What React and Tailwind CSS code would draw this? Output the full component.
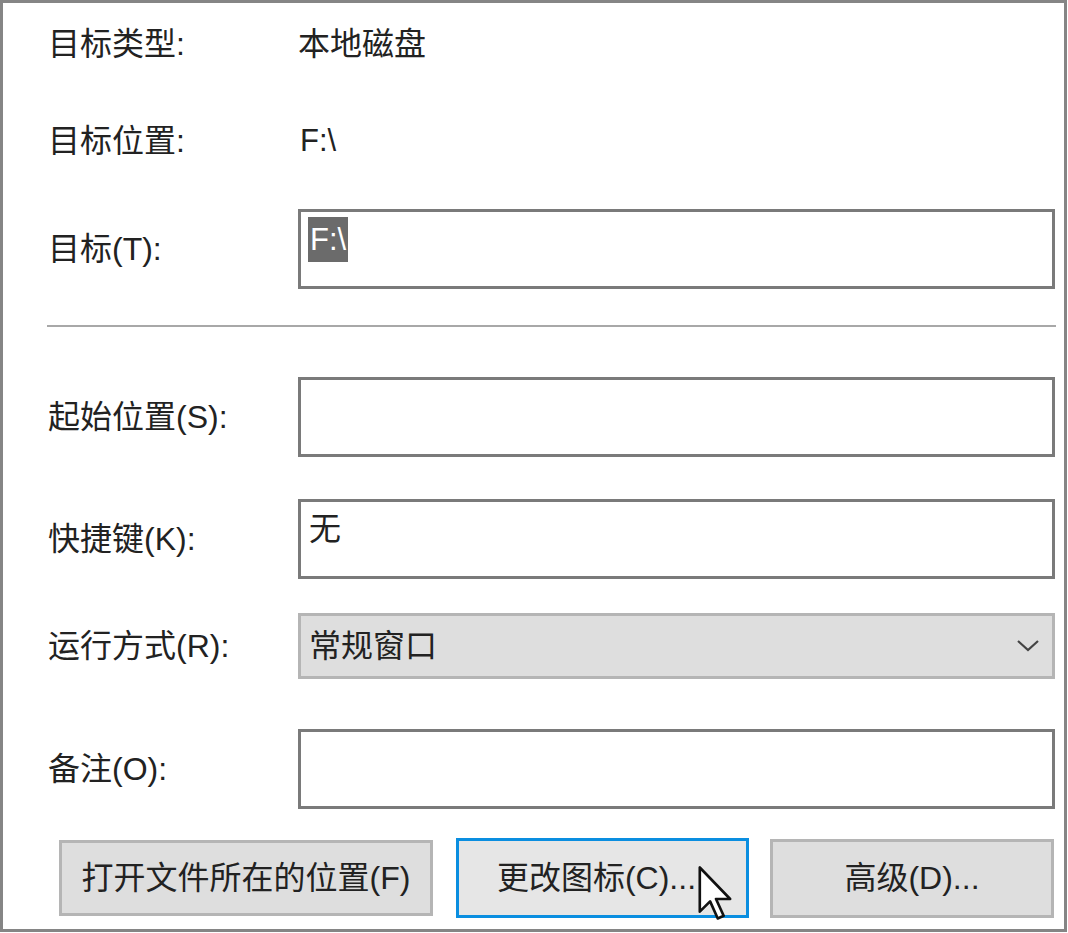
import React from "react";

const font = { fontFamily: '"Liberation Sans", "Noto Sans CJK SC", sans-serif' };

function Row({ label, top, children, height = "h-[80px]" }) {
    return (
        <div className={`flex items-center ${top} ${height}`}>
            <div className="w-[250px] shrink-0 text-[32px] leading-none text-[#222]">{label}</div>
            <div className="flex-1 h-full">{children}</div>
        </div>
    );
}

function TextBox({ children }) {
    return (
        <div className="h-full w-[757px] border-[3px] border-[#7a7a7a] bg-white px-[8px] pt-[9px] text-[32px] leading-[36px] text-[#222]">
            {children}
        </div>
    );
}

function Cursor() {
    return (
        <svg className="absolute left-[697px] top-[866px]" width="38" height="56" viewBox="0 0 12 19">
            <path
                d="M0.5 0.5 L0.5 15.5 L4 12 L6.6 17.8 L8.6 16.9 L6 11.2 L10.8 11.2 Z"
                fill="#fff"
                stroke="#111"
                strokeWidth="0.9"
                strokeLinejoin="round"
            />
        </svg>
    );
}

export default function App() {
    return (
        <div className="relative w-[1068px] h-[933px] bg-white" style={font}>
            <div className="w-[1067px] h-[932px] border-[3px] border-[#858585] pl-[45px] pr-[9px]">
                <Row label="目标类型:" top="mt-[21px]" height="h-[40px]">
                    <div className="flex items-center h-full text-[32px] text-[#222]">本地磁盘</div>
                </Row>
                <Row label="目标位置:" top="mt-[57px]" height="h-[40px]">
                    <div className="flex items-center h-full pl-[2px] text-[31px] text-[#222]">F:\</div>
                </Row>
                <Row label="目标(T):" top="mt-[48px]">
                    <div className="h-full w-[757px] border-[3px] border-[#7a7a7a] bg-white pl-[7px] pt-[5px]">
                        <span className="inline-block bg-[#6b6b6b] px-[2px] text-[31px] leading-[45px] text-white">F:\</span>
                    </div>
                </Row>
                <div className="mt-[36px] h-[2px] w-[1009px] -ml-[1px] bg-[#a8a8a8]" />
                <Row label="起始位置(S):" top="mt-[50px]">
                    <TextBox />
                </Row>
                <Row label="快捷键(K):" top="mt-[42px]">
                    <TextBox>无</TextBox>
                </Row>
                <Row label="运行方式(R):" top="mt-[34px]" height="h-[66px]">
                    <div className="flex h-full w-[757px] items-center justify-between border-[3px] border-[#b5b5b5] bg-[#dedede] pl-[8px] pr-[12px]">
                        <span className="text-[32px] text-[#222]">常规窗口</span>
                        <svg width="24" height="14" viewBox="0 0 24 14">
                            <path d="M2 2 L12 11 L22 2" fill="none" stroke="#444" strokeWidth="2.2" />
                        </svg>
                    </div>
                </Row>
                <Row label="备注(O):" top="mt-[50px]">
                    <TextBox />
                </Row>
                <div className="mt-[29px] flex items-center">
                    <div className="ml-[11px] flex h-[76px] w-[374px] items-center justify-center border-[3px] border-[#b5b5b5] bg-[#dedede] text-[32px] text-[#222]">
                        打开文件所在的位置(F)
                    </div>
                    <div className="ml-[23px] flex h-[80px] w-[293px] items-center justify-center border-[3px] border-[#0a8ee0] bg-[#e6e6e6] pr-[12px] text-[32px] text-[#222]">
                        更改图标(C)...
                    </div>
                    <div className="ml-[21px] flex h-[79px] w-[284px] items-center justify-center border-[3px] border-[#b5b5b5] bg-[#dedede] text-[32px] text-[#222]">
                        高级(D)...
                    </div>
                </div>
            </div>
            <Cursor />
        </div>
    );
}
